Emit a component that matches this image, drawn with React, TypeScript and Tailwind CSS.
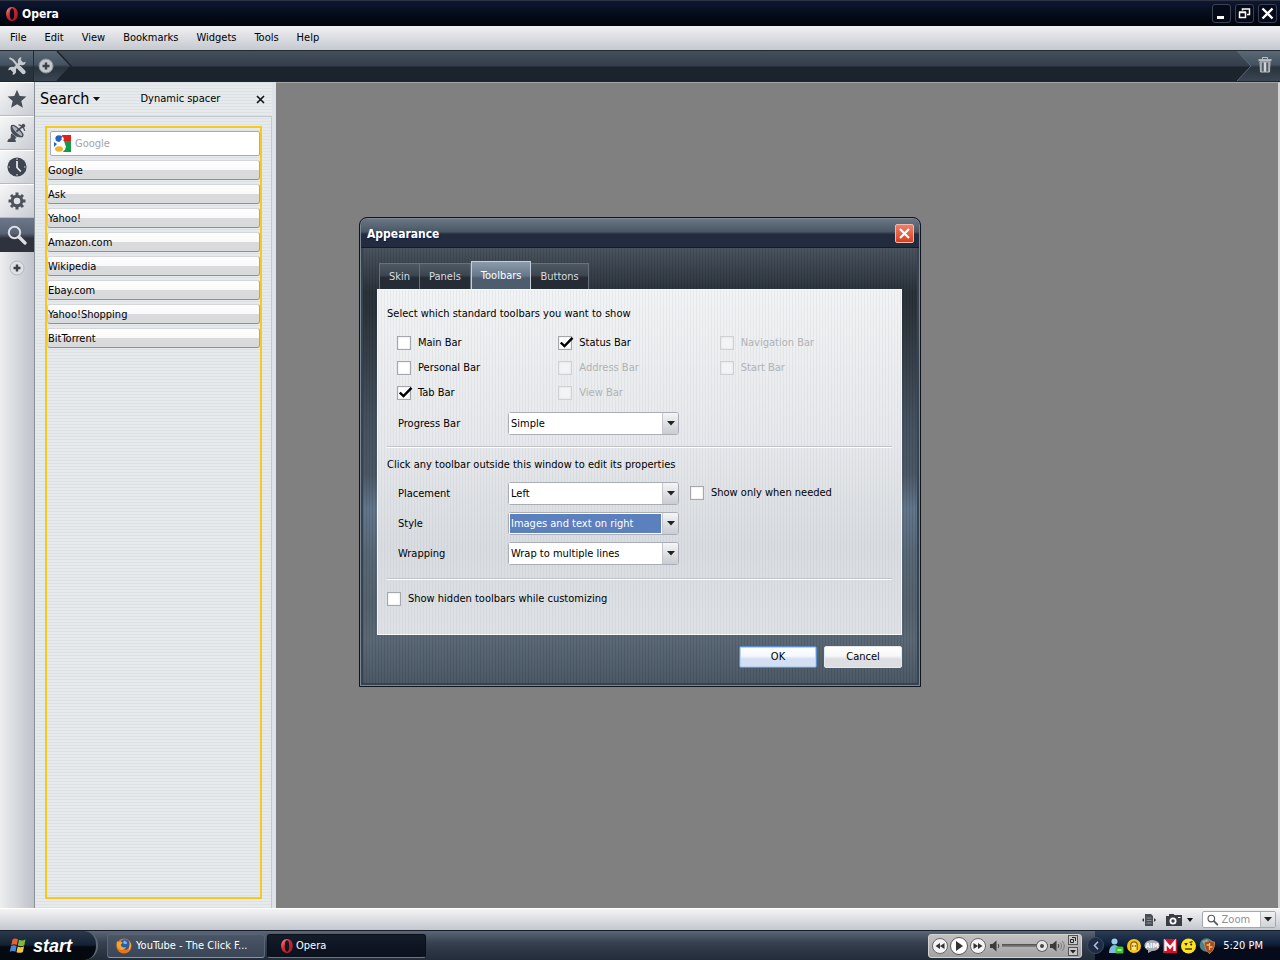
import { useState } from "react";
import type { ReactNode } from "react";

const menuItems = ["File", "Edit", "View", "Bookmarks", "Widgets", "Tools", "Help"];

const searchEngines = [
  "Google",
  "Ask",
  "Yahoo!",
  "Amazon.com",
  "Wikipedia",
  "Ebay.com",
  "Yahoo!Shopping",
  "BitTorrent",
];

const tabs = ["Skin", "Panels", "Toolbars", "Buttons"];

const toolbars = [
  { name: "Main Bar", checked: false, disabled: false },
  { name: "Status Bar", checked: true, disabled: false },
  { name: "Navigation Bar", checked: false, disabled: true },
  { name: "Personal Bar", checked: false, disabled: false },
  { name: "Address Bar", checked: false, disabled: true },
  { name: "Start Bar", checked: false, disabled: true },
  { name: "Tab Bar", checked: true, disabled: false },
  { name: "View Bar", checked: false, disabled: true },
];

function OperaLogo() {
  return (
    <svg width="14" height="16" viewBox="0 0 14 16">
      <defs>
        <linearGradient id="opera-red" x1="0" y1="0" x2="1" y2="1">
          <stop offset="0" stopColor="#f3a0a0" />
          <stop offset="0.4" stopColor="#d32a33" />
          <stop offset="1" stopColor="#a0161e" />
        </linearGradient>
      </defs>
      <path
        fill="url(#opera-red)"
        fillRule="evenodd"
        d="M7 1c3.600 0 5.800 3 5.800 7s-2.200 7-5.800 7-5.800-3-5.800-7 2.200-7 5.800-7zm0 1.300c-1.500 0-2.200 2.300-2.200 5.700s.7 5.700 2.200 5.700 2.200-2.300 2.200-5.700-.7-5.700-2.200-5.700z"
      />
    </svg>
  );
}

function PlusBadge({ dark = false }: { dark?: boolean }) {
  return (
    <svg width="16" height="16" viewBox="0 0 16 16">
      <circle cx="8" cy="8" r="7" fill={dark ? "#c3c8cd" : "#dfe2e5"} stroke={dark ? "#8b939b" : "#b3b8be"} />
      <path d="M8 4.500v7M4.500 8h7" stroke="#3b4149" strokeWidth="2.400" />
    </svg>
  );
}

function StarIcon() {
  return (
    <svg width="20" height="20" viewBox="0 0 20 20">
      <path
        fill="#474d57"
        d="M10 .8l2.700 6.200 6.700.6-5.100 4.400 1.600 6.700L10 15.200l-5.900 3.500 1.600-6.700L.6 7.600l6.700-.6z"
      />
    </svg>
  );
}

function DishIcon() {
  return (
    <svg width="20" height="20" viewBox="0 0 20 20" fill="none" stroke="#474d57">
      <path d="M4.500 2.500C2.500 8.500 7.500 15.500 16 13.500z" fill="#474d57" />
      <ellipse cx="10.200" cy="8" rx="7.400" ry="2.400" transform="rotate(44 10.200 8)" fill="#aeb3bb" strokeWidth="1.400" />
      <path d="M9.500 8.500L16 3" strokeWidth="1.700" />
      <circle cx="16.300" cy="2.800" r="1.500" fill="#474d57" />
      <path d="M11.500 1.800c2.500.2 5.800 3 6.200 6" strokeWidth="1.300" />
      <path d="M4.500 11l4.500 3.500-1.500 1.500 1 2.500H.8l.8-2 2.400-.8z" fill="#474d57" />
    </svg>
  );
}

function ClockIcon() {
  return (
    <svg width="20" height="20" viewBox="0 0 20 20">
      <circle cx="10" cy="10" r="9.600" fill="#3f4550" />
      <path d="M10 4v6.500l3.800 4" stroke="#eceef0" strokeWidth="1.700" fill="none" />
      <path d="M10 1.500v1.500M10 17v1.500M1.500 10H3M17 10h1.500" stroke="#d5d8dc" strokeWidth="1.200" />
    </svg>
  );
}

function GearIcon() {
  return (
    <svg width="20" height="20" viewBox="0 0 20 20" stroke="#4d535d" fill="none">
      <circle cx="10" cy="10" r="4.800" strokeWidth="3" />
      <path
        strokeWidth="3"
        d="M10 1.500v3M10 15.500v3M1.500 10h3M15.500 10h3M4 4l2 2M14 14l2 2M16 4l-2 2M6 14l-2 2"
      />
    </svg>
  );
}

function LensIcon({ size, color }: { size: number; color: string }) {
  return (
    <svg width={size} height={size} viewBox="0 0 20 20" fill="none" stroke={color}>
      <circle cx="7.500" cy="7.500" r="5.700" strokeWidth="2" />
      <path d="M12 12l6 6" strokeWidth="3.200" strokeLinecap="round" />
    </svg>
  );
}

function ToolsIcon() {
  return (
    <svg width="20" height="20" viewBox="0 0 20 20" fill="none" stroke="#c5cad0">
      <path d="M2.500 2l3.500 2 5.500 6.500" strokeWidth="2" />
      <path d="M12 11.500l4.500 4.500" strokeWidth="4.400" strokeLinecap="round" />
      <path d="M14 6L5 15" strokeWidth="3" />
      <path d="M14.500 1.200a4 4 0 1 0 4.300 4.600l-2.600.7-2.400-2.400z" fill="#c5cad0" stroke="none" />
      <path d="M5.500 18.800a4 4 0 1 0-4.300-4.600l2.600-.4 2.200 2.200z" fill="#c5cad0" stroke="none" />
    </svg>
  );
}

function TrashIcon() {
  return (
    <svg width="14" height="16" viewBox="0 0 14 16" fill="none" stroke="#b9bec4">
      <path d="M4.500 2.500v-2h5v2" />
      <path d="M.5 3.200h13" strokeWidth="2.200" />
      <path d="M2 5h10l-.5 10h-9z" fill="#99a0a8" />
      <path d="M4.800 5.500v9M9.200 5.500v9" stroke="#4b535c" strokeWidth="1.400" />
      <path d="M7 5.500v9" stroke="#dfe2e5" strokeWidth="1.600" />
    </svg>
  );
}

function GoogleIcon() {
  return (
    <svg width="17" height="17" viewBox="0 0 17 17">
      <path fill="#fff" d="M0 0h17v17H0z" />
      <path fill="#e0201c" d="M8 0h9v6H9z" />
      <path fill="#149a48" d="M10 6h7v11H9l3-5z" />
      <path fill="#2a62c4" d="M0 7l3 2-3 3z" />
      <ellipse cx="5" cy="3.600" rx="3.600" ry="3.300" fill="#2a62c4" />
      <ellipse cx="5" cy="14" rx="4" ry="2.800" fill="#f0b429" />
      <path d="M8 2.500c3 3-3 4-1.500 6S11.500 11 10 15" stroke="#fff" strokeWidth="2" fill="none" />
    </svg>
  );
}

function FirefoxIcon() {
  return (
    <svg width="16" height="16" viewBox="0 0 16 16">
      <circle cx="8" cy="8" r="7.600" fill="#e8741c" />
      <circle cx="8.800" cy="6.500" r="5.200" fill="#2a5da8" />
      <path d="M8 2.500c2 .5 3 1.500 3.200 3l-2 .8L7 5z" fill="#7fb6e6" />
      <path d="M1 3l1.500 1.200C4 3 6 3.500 6.500 5L4.800 6.500C5 9 7.500 10 10 9c-1 3-5 4-7.500 1.500S.5 5.500 1 3z" fill="#f6a52c" />
      <path d="M13.500 3c1.800 3 1.500 7-1 9.500 1-3 1.500-6 1-9.500z" fill="#fbd44a" />
    </svg>
  );
}

function WindowsFlag() {
  return (
    <svg width="18" height="18" viewBox="0 0 18 18">
      <path fill="#e8602c" d="M3.500 2.500C5.500 1 7 1.300 9 2.300L7.800 8C6 7 4.300 7 2.300 8z" />
      <path fill="#7dbb3c" d="M10 2.800c2 1 4 1 6.500-.2L15.300 8.300c-2.400 1.200-4.300 1-6.400.2z" />
      <path fill="#4a86d8" d="M2 9c2-1.200 3.800-1 5.600 0l-1.200 5.700c-2-1-3.600-1-5.600 0z" />
      <path fill="#f4c73a" d="M8.700 9.500c2 1 4 1 6.400-.2L13.900 15c-2.400 1.200-4.300 1-6.400.2z" />
    </svg>
  );
}

function Caret() {
  return (
    <svg width="8" height="5" viewBox="0 0 8 5">
      <path d="M0 0h8L4 4.500z" fill="#222" />
    </svg>
  );
}

function Speaker({ waves = 1 }: { waves?: number }) {
  return (
    <svg width={waves > 1 ? 15 : 10} height="12" viewBox={waves > 1 ? "0 0 15 12" : "0 0 10 12"}>
      <path d="M0 4h2.500L6.500.5v11L2.500 8H0z" fill="#3a3a3a" />
      <path d="M8 4c1 1 1 3 0 4" stroke="#3a3a3a" fill="none" />
      {waves > 1 && <path d="M10 2.500c2 2 2 5 0 7M12 1c3 3 3 7 0 10" stroke="#777" fill="none" />}
    </svg>
  );
}

function Checkbox({
  label,
  checked = false,
  disabled = false,
}: {
  label: string;
  checked?: boolean;
  disabled?: boolean;
}) {
  return (
    <label className={`flex items-center gap-[7px] ${disabled ? "text-[#b0b3b6]" : "text-black"}`}>
      <span className="relative h-3.5 w-3.5">
        <input
          type="checkbox"
          defaultChecked={checked}
          disabled={disabled}
          className="peer block h-3.5 w-3.5 appearance-none border border-[#a4a7ab] bg-white shadow-[inset_0_0_2px_#d5d5d5] disabled:border-[#cfd1d4] disabled:bg-[#f3f4f5]"
        />
        <svg
          className="pointer-events-none absolute left-0.5 top-px hidden peer-checked:block"
          width="14"
          height="11"
          viewBox="0 0 14 11"
        >
          <path d="M.8 5.500L4.500 9 12.500 .8" stroke="#000" strokeWidth="2.400" fill="none" />
        </svg>
      </span>
      {label}
    </label>
  );
}

function SelectRow({
  id,
  label,
  value,
  active = false,
  children,
}: {
  id: string;
  label: string;
  value: string;
  active?: boolean;
  children?: ReactNode;
}) {
  return (
    <div className="flex h-[30px] items-center pl-[11px]">
      <label htmlFor={id} className="w-[110px] pt-0.5">
        {label}
      </label>
      <div className="mr-[11px] flex h-[23px] w-[171px] rounded-[3px] border border-[#a9adb5] bg-white">
        <div className="flex-1">
          <select
            id={id}
            defaultValue={value}
            className={`h-full w-full appearance-none border border-white pl-px pt-0.5 outline-none ${
              active ? "bg-[#5c80bd] text-white" : "bg-white text-black"
            }`}
          >
            <option>{value}</option>
          </select>
        </div>
        <span className="flex w-4 items-center justify-center rounded-r-[2px] border-l border-[#c4c7cc] bg-linear-to-b from-[#f4f5f6] to-[#c9ccd2]">
          <Caret />
        </span>
      </div>
      {children}
    </div>
  );
}

function WindowButton({ label, children }: { label: string; children: ReactNode }) {
  return (
    <button
      aria-label={label}
      className="flex h-[19px] w-[19px] items-center justify-center rounded-[3px] border border-[#3a4254] bg-[#060a18]"
    >
      <svg width="13" height="13" viewBox="0 0 13 13" fill="none" stroke="#fff">
        {children}
      </svg>
    </button>
  );
}

function RailButton({ label, active = false, children }: { label: string; active?: boolean; children: ReactNode }) {
  return (
    <button
      aria-label={label}
      className={`flex h-[34px] items-center justify-center ${
        active
          ? "bg-linear-to-b from-[#6c778a] from-0% via-[#5a6376] via-45% to-[#2d323c] to-60%"
          : "border-b border-t border-b-[#b7bbc1] border-t-white bg-linear-to-br from-[#f6f7f8] to-[#c9cdd4]"
      }`}
    >
      {children}
    </button>
  );
}

function AppearanceDialog() {
  const [tab, setTab] = useState("Toolbars");

  return (
    <section
      role="dialog"
      aria-labelledby="dialog-title"
      className="pointer-events-auto flex w-[562px] flex-col rounded-t-lg border border-[#10161f] bg-[#4f5d6b] p-px ring-1 ring-inset ring-[#7b8794]"
    >
      <header className="flex h-[29px] items-center justify-between rounded-t-md border-b border-[#141b28] bg-linear-to-b from-[#6a7682] from-0% via-[#4a5765] via-45% to-[#222c3e] to-55% pl-[6px] pr-[5px]">
        <h1 id="dialog-title" className="pt-0.5 text-[12px] font-bold text-white [text-shadow:1px_1px_1px_#0b1a4a]">
          Appearance
        </h1>
        <button
          aria-label="Close dialog"
          className="flex h-[19px] w-[19px] items-center justify-center rounded-[2px] border border-[#f3b9a8] bg-linear-to-b from-[#ee7f66] to-[#dc3a1c]"
        >
          <svg width="11" height="11" viewBox="0 0 11 11">
            <path d="M1 1l9 9M10 1l-9 9" stroke="#fff" strokeWidth="2.200" />
          </svg>
        </button>
      </header>

      <div className="border-x-2 border-b-2 border-[#37434f] bg-[repeating-linear-gradient(90deg,rgba(0,0,0,0.1)_0_1px,transparent_1px_3px),linear-gradient(180deg,#49545f_0%,#2b323a_10%,#2c333a_14%,#465462_42%,#4b5866_52%,#62768b_60%,#586877_70%,#55636f_82%,#5b6976_90%,#4c5a68_100%)] pb-[15px] pl-3.5 pr-[15px] pt-[13px]">
        <div role="tablist" className="flex items-end pl-0.5">
          {tabs.map((name) => (
            <button
              key={name}
              role="tab"
              aria-selected={tab === name}
              onClick={() => setTab(name)}
              className={
                tab === name
                  ? "h-7 border-x border-t border-[#c5cfda] bg-linear-to-b from-[#8c9bab] from-0% via-[#67788a] via-50% to-[#4d5d6e] to-60% px-[9px] text-white"
                  : "h-[26px] border-r border-t border-[#66717c] bg-linear-to-b from-[#4e5964] from-0% via-[#3c4650] via-45% to-[#252c35] to-55% px-[9px] text-[#d9dde2] first:border-l"
              }
            >
              {name}
            </button>
          ))}
        </div>

        <div className="border border-[#f6f8f9] bg-[repeating-linear-gradient(90deg,rgba(120,140,150,0.09)_0_1px,transparent_1px_3px),linear-gradient(180deg,#f1f3f4,#e6e8eb_45%,#d9dce0_75%,#dfe2e5)] px-[9px] pb-[27px] pt-4">
          <p className="h-4 leading-4">Select which standard toolbars you want to show</p>
          <div className="mt-2 grid grid-cols-3 pl-[10px] pr-[11px]">
            {toolbars.map((t) => (
              <div key={t.name} className="flex h-[25px] items-center">
                <Checkbox label={t.name} checked={t.checked} disabled={t.disabled} />
              </div>
            ))}
          </div>
          <div className="mt-[3px]">
            <SelectRow id="progress" label="Progress Bar" value="Simple" />
          </div>
          <hr className="mt-2 border-b border-t border-b-white border-t-[#bfc3c8]" />
          <p className="mt-[9px] h-4 leading-4">Click any toolbar outside this window to edit its properties</p>
          <div className="mt-[5px]">
            <SelectRow id="placement" label="Placement" value="Left">
              <Checkbox label="Show only when needed" />
            </SelectRow>
            <SelectRow id="style" label="Style" value="Images and text on right" active />
            <SelectRow id="wrapping" label="Wrapping" value="Wrap to multiple lines" />
          </div>
          <hr className="mt-[10px] border-b border-t border-b-white border-t-[#bfc3c8]" />
          <div className="mt-[11px] flex h-4 items-center">
            <Checkbox label="Show hidden toolbars while customizing" />
          </div>
        </div>

        <div className="mt-[11px] flex justify-end gap-[7px]">
          <button className="h-[22px] w-[78px] rounded-[2px] border border-[#5c8fd0] bg-linear-to-b from-white from-0% via-[#f5f8fd] via-45% to-[#d3dff2] to-60% ring-1 ring-inset ring-[#b9d2f2]">
            OK
          </button>
          <button className="h-[22px] w-[78px] rounded-[2px] border border-[#e6e8ea] bg-linear-to-b from-white from-0% via-[#f7f7f8] via-45% to-[#dcdee2] to-60%">
            Cancel
          </button>
        </div>
      </div>
    </section>
  );
}

function MediaPlayer() {
  return (
    <div className="flex h-6 w-[154px] items-center rounded-[3px] border border-[#d2d2d2] bg-linear-to-b from-[#c2c2c2] to-[#a2a2a2] px-[3px]">
      <button aria-label="Previous" className="flex h-4 w-4 items-center justify-center rounded-full border border-[#666] bg-[#f4f4f4]">
        <svg width="10" height="6" viewBox="0 0 10 6"><path d="M5 0v6L.5 3zM9.500 0v6L5 3z" fill="#333" /></svg>
      </button>
      <button aria-label="Play" className="mx-[2px] flex h-[18px] w-[18px] items-center justify-center rounded-full border border-[#555] bg-white">
        <svg width="8" height="10" viewBox="0 0 8 10"><path d="M1 0l7 5-7 5z" fill="#333" /></svg>
      </button>
      <button aria-label="Next" className="mr-1 flex h-4 w-4 items-center justify-center rounded-full border border-[#666] bg-[#f4f4f4]">
        <svg width="10" height="6" viewBox="0 0 10 6"><path d="M.5 0v6L5 3zM5 0v6l4.500-3z" fill="#333" /></svg>
      </button>
      <Speaker />
      <input
        type="range"
        aria-label="Volume"
        defaultValue={98}
        className="mx-0.5 h-[10px] w-[46px] appearance-none bg-[linear-gradient(#4c4c4c,#8a8a86)] bg-[length:100%_3px] bg-center bg-no-repeat [&::-webkit-slider-thumb]:h-[10px] [&::-webkit-slider-thumb]:w-[10px] [&::-webkit-slider-thumb]:appearance-none [&::-webkit-slider-thumb]:rounded-full [&::-webkit-slider-thumb]:border-[3px] [&::-webkit-slider-thumb]:border-[#e8e8e8] [&::-webkit-slider-thumb]:bg-[#444] [&::-webkit-slider-thumb]:shadow-[0_0_0_1px_#666]"
      />
      <Speaker waves={3} />
      <div className="ml-auto flex flex-col gap-0.5">
        <button aria-label="Restore player" className="flex h-[10px] w-[10px] items-center justify-center border border-[#555] bg-[#c8c8c8]">
          <svg width="6" height="6" viewBox="0 0 6 6" fill="none" stroke="#222"><path d="M.5 2.500h3v3h-3zM2 .5h3.500V4" /></svg>
        </button>
        <button aria-label="Player menu" className="flex h-[9px] w-[10px] items-center justify-center border border-[#555] bg-[#c8c8c8]">
          <svg width="6" height="4" viewBox="0 0 6 4"><path d="M0 0h6L3 3.500z" fill="#222" /></svg>
        </button>
      </div>
    </div>
  );
}

function Tray() {
  return (
    <div className="flex h-full items-center gap-[2px] bg-linear-to-b from-[#2a3d55] from-0% via-[#10203a] via-45% to-[#050b1a] to-60% pr-[17px]">
      <button aria-label="Show hidden icons" className="-ml-2 mr-0.5 flex h-[17px] w-[17px] items-center justify-center rounded-full border border-[#3d4c66] bg-[#1f2b45]">
        <svg width="6" height="9" viewBox="0 0 6 9"><path d="M5 .8L1.500 4.500 5 8.200" stroke="#aebdd8" strokeWidth="1.600" fill="none" /></svg>
      </button>
      {/* messenger */}
      <svg width="16" height="16" viewBox="0 0 16 16">
        <circle cx="6.500" cy="3.500" r="3" fill="#9fd0ea" />
        <path d="M1 15c0-5 2.500-8 5.500-8S12 10 12 15z" fill="#7cbbe0" />
        <rect x="7.500" y="8.500" width="8" height="7" rx="1.500" fill="#3cc42c" />
        <path d="M9.500 12h4" stroke="#d8ffd0" strokeWidth="1.500" />
      </svg>
      <svg width="16" height="16" viewBox="0 0 16 16">
        <circle cx="8" cy="8" r="7" fill="#f5c518" />
        <path d="M4.800 12V7a3.200 3.200 0 0 1 6.400 0v5" fill="#fbe27a" stroke="#8a5a00" strokeWidth="1.200" />
        <circle cx="6.800" cy="8" r=".7" fill="#553300" />
        <circle cx="9.300" cy="8" r=".7" fill="#553300" />
      </svg>
      <svg width="16" height="16" viewBox="0 0 16 16">
        <ellipse cx="8" cy="7.500" rx="7.600" ry="5.500" fill="#a9adb5" />
        <path d="M4 12l0 3 4-2z" fill="#a9adb5" />
        <text x="8" y="10" textAnchor="middle" fontSize="7" fontWeight="bold" fill="#fff">AIM</text>
      </svg>
      {/* antivirus */}
      <svg width="16" height="16" viewBox="0 0 16 16">
        <rect x="1" y="1" width="14" height="14" fill="#d3122e" />
        <path d="M3.500 13V4L8 9.500 12.500 4v9" stroke="#fff" strokeWidth="2.400" fill="none" />
      </svg>
      <svg width="17" height="16" viewBox="0 0 17 16">
        <circle cx="8.500" cy="8" r="7.500" fill="#ffe21a" />
        <path d="M4.500 5.500h3M9.500 4.500l3-.8" stroke="#222" strokeWidth="1.200" />
        <circle cx="6" cy="6.500" r="1" fill="#222" />
        <circle cx="11.200" cy="6.500" r="1" fill="#222" />
        <path d="M5 11h7" stroke="#222" strokeWidth="1.300" />
      </svg>
      <svg width="17" height="16" viewBox="0 0 17 16">
        <circle cx="7.500" cy="7" r="6.800" fill="#4d7f86" />
        <path d="M3 3c2 0 4-1 5-2l2 4-4 3z" fill="#8fb8a8" />
        <path d="M5.500 4c2 0 3.500-.6 5-1.600C12 3.400 13.500 4 15.500 4c0 6-1.500 9-5 11.500C7 13 5.500 10 5.500 4z" fill="#a8492a" stroke="#b98a5a" />
        <path d="M10.500 5v4h3M10.500 9v3M7.500 7h3" stroke="#efc24a" strokeWidth="1.300" fill="none" />
      </svg>
      <time className="ml-[5px] whitespace-nowrap text-white">5:20 PM</time>
    </div>
  );
}

export default function App() {
  return (
    <div className="relative flex h-screen min-h-[760px] flex-col overflow-hidden bg-[#808080] font-['DejaVu_Sans_Condensed','DejaVu_Sans',sans-serif] text-[11px] leading-4 text-black">
      {/* Title bar */}
      <header className="flex h-[26px] shrink-0 items-center border-t border-[#2d3342] bg-linear-to-b from-[#0d1730] to-[#02040a] pl-[5px] pr-[3px]">
        <OperaLogo />
        <span className="ml-[3px] text-[12px] font-bold text-white">Opera</span>
        <div className="ml-auto flex gap-1">
          <WindowButton label="Minimize">
            <path d="M2 10.500h7" strokeWidth="3" />
          </WindowButton>
          <WindowButton label="Restore">
            <path d="M1.500 5.500h6v5h-6zM1 5h7" strokeWidth="1.500" />
            <path d="M4.500 3.500V2h7v5.500H9" strokeWidth="1.500" />
          </WindowButton>
          <WindowButton label="Close">
            <path d="M1.500 1.500l10 10M11.500 1.500l-10 10" strokeWidth="2.400" />
          </WindowButton>
        </div>
      </header>

      {/* Menu */}
      <nav className="flex h-6 shrink-0 items-center gap-[18px] bg-linear-to-b from-[#f0f1f3] to-[#c5c9d0] pl-[10px]">
        {menuItems.map((item) => (
          <button key={item}>{item}</button>
        ))}
      </nav>

      {/* Tab bar */}
      <div className="flex h-8 shrink-0 justify-between border-b border-t border-b-[#20262d] border-t-[#252b33] bg-linear-to-b from-[#444f5c] from-0% via-[#353f4b] via-48% to-[#1b232c] to-55%">
        <div className="flex">
          <button
            aria-label="Customize"
            className="flex w-[34px] items-center justify-center border-r border-[#222a33] bg-linear-to-b from-[#5a6877] from-0% via-[#45525f] via-45% to-[#29333e] to-55%"
          >
            <ToolsIcon />
          </button>
          <button aria-label="New tab" className="relative flex w-[39px] items-center pl-1">
            <svg className="absolute inset-0 h-full w-full" viewBox="0 0 39 30" preserveAspectRatio="none">
              <defs>
                <linearGradient id="arrow" x1="0" y1="0" x2="0" y2="1">
                  <stop offset="0" stopColor="#5a6877" />
                  <stop offset="0.45" stopColor="#45525f" />
                  <stop offset="0.55" stopColor="#29333e" />
                  <stop offset="1" stopColor="#3a4652" />
                </linearGradient>
              </defs>
              <path d="M0 0h23l14 15-14 15H0z" fill="url(#arrow)" />
              <path d="M23 0l14 15-14 15" fill="none" stroke="#1d242c" strokeWidth="1.500" />
            </svg>
            <span className="relative">
              <PlusBadge dark />
            </span>
          </button>
        </div>
        <button aria-label="Closed tabs" className="relative flex w-[45px] items-center justify-end pb-0.5 pr-2">
          <svg className="absolute inset-0 h-full w-full" viewBox="0 0 45 30" preserveAspectRatio="none">
            <path d="M2 0h43v30H2l14-15z" fill="url(#arrow)" />
            <path d="M2 0l14 15L2 30" fill="none" stroke="#5c6976" />
          </svg>
          <span className="relative">
            <TrashIcon />
          </span>
        </button>
      </div>

      <main className="flex min-h-0 flex-1">
        {/* Panel selector */}
        <nav className="flex w-[35px] shrink-0 flex-col border-r border-[#8b9097] bg-linear-to-r from-[#eceef0] to-[#bfc3ca]">
          <RailButton label="Bookmarks"><StarIcon /></RailButton>
          <RailButton label="Feeds"><DishIcon /></RailButton>
          <RailButton label="History"><ClockIcon /></RailButton>
          <RailButton label="Settings"><GearIcon /></RailButton>
          <RailButton label="Search" active><LensIcon size={20} color="#dcdfe3" /></RailButton>
          <button aria-label="Add panel" className="flex h-8 items-center justify-center">
            <PlusBadge />
          </button>
        </nav>

        {/* Search panel */}
        <aside className="flex w-[241px] shrink-0 flex-col border-r-4 border-[#dfe3e7] bg-[#e6eaec] bg-[repeating-linear-gradient(0deg,rgba(120,140,150,0.09)_0_1px,transparent_1px_3px)]">
          <div className="flex h-[34px] items-center pl-[5px] pr-[7px]">
            <button className="flex items-center gap-1 text-[16px]">
              Search
              <svg width="7" height="4" viewBox="0 0 7 4"><path d="M0 0h7L3.500 4z" fill="#111" /></svg>
            </button>
            <span className="ml-10">Dynamic spacer</span>
            <button aria-label="Close panel" className="ml-auto">
              <svg width="9" height="9" viewBox="0 0 9 9"><path d="M1 1l7 7M8 1L1 8" stroke="#111" strokeWidth="1.600" /></svg>
            </button>
          </div>
          <div className="flex flex-1 flex-col border-r border-t border-[#c3c8cd] pb-[9px] pl-[10px] pr-[9px] pt-[9px]">
            <div className="flex flex-1 flex-col gap-1 border-2 border-[#f9c81c]">
              <div className="ml-[3px] mt-[3px] flex h-[25px] items-center gap-1 rounded-[2px] border border-[#a8acb1] bg-white pl-[3px]">
                <GoogleIcon />
                <input
                  type="text"
                  aria-label="Search with Google"
                  placeholder="Google"
                  className="min-w-0 flex-1 bg-transparent outline-none placeholder:text-[#a2a4a7]"
                />
              </div>
              {searchEngines.map((name) => (
                <button
                  key={name}
                  className="h-5 rounded-[3px] border border-b-[#8d9094] border-l-[#c9cbce] border-r-[#a5a8ab] border-t-[#d4d6d8] bg-linear-to-b from-white from-0% via-[#f9f9f9] via-48% to-[#d9dadb] to-52% pt-0.5 text-left"
                >
                  {name}
                </button>
              ))}
            </div>
          </div>
        </aside>

        <div className="flex-1 border-r-2 border-t border-r-[#d5d5d5] border-t-[#a5a5a5] bg-[#808080]" />
      </main>

      {/* Status bar */}
      <footer className="flex h-[22px] shrink-0 items-center justify-end border-t border-white bg-linear-to-b from-[#f3f4f5] to-[#c3c7cf] pr-1">
        <button aria-label="Fit to width" className="mr-[9px]">
          <svg width="16" height="14" viewBox="0 0 16 14">
            <path d="M4 1h6l2 2v10H4z" fill="#4a4e55" />
            <path d="M5.500 5h5M5.500 7.500h5M5.500 10h5" stroke="#8b9097" />
            <path d="M3 5v4L1 7zM13 5v4L15 7z" fill="#333" />
          </svg>
        </button>
        <button aria-label="Show images" className="flex items-center gap-[5px]">
          <svg width="16" height="14" viewBox="0 0 16 14">
            <path d="M0 3h3V1h5v1h8v11H0z" fill="#3a3e44" />
            <circle cx="7" cy="8" r="3.500" fill="#fff" />
            <circle cx="7" cy="8" r="1.700" fill="#3a3e44" />
            <path d="M12 4.500h2.500" stroke="#fff" />
          </svg>
          <svg width="6" height="4" viewBox="0 0 6 4"><path d="M0 0h6L3 4z" fill="#111" /></svg>
        </button>
        <div className="ml-[9px] flex h-[17px] w-[74px] items-center rounded-[2px] border border-[#a4a8ae] bg-white pl-1">
          <LensIcon size={12} color="#555a60" />
          <input
            aria-label="Zoom"
            placeholder="Zoom"
            className="ml-[3px] w-[38px] bg-transparent outline-none placeholder:text-[#8d9094]"
          />
          <button aria-label="Zoom levels" className="ml-auto flex h-full w-4 items-center justify-center border-l border-[#b5b8bd] bg-linear-to-b from-[#f1f2f3] to-[#cfd2d7]">
            <Caret />
          </button>
        </div>
      </footer>

      {/* Taskbar */}
      <footer className="flex h-[30px] shrink-0 items-center border-t border-[#161d28] bg-linear-to-b from-[#5b6777] from-0% via-[#37414f] via-40% to-[#232c39] to-100%">
        <button className="flex h-full w-[98px] items-center rounded-r-[14px] border-r-2 border-[#5d6876] bg-linear-to-b from-[#2b394c] from-0% via-[#152133] via-48% to-[#04080f] to-55% pl-[9px] font-['Liberation_Sans',sans-serif] text-[18px] font-bold italic text-white">
          <WindowsFlag />
          <span className="ml-1.5">start</span>
        </button>
        <button className="ml-[9px] flex h-6 w-[158px] items-center gap-1 rounded-[3px] border border-[#5a6676] border-b-[#8995a5] bg-linear-to-b from-[#4a5666] to-[#3a4656] pl-2 text-white">
          <FirefoxIcon />
          YouTube - The Click F...
        </button>
        <button className="ml-0.5 flex h-6 w-[159px] items-center gap-0.5 rounded-[3px] border border-[#0a0e16] border-b-[#6a7686] bg-linear-to-b from-[#141c2a] to-[#0a101c] pl-3 text-white">
          <OperaLogo />
          Opera
        </button>
        <div className="ml-auto mr-[13px]">
          <MediaPlayer />
        </div>
        <Tray />
      </footer>

      <div className="pointer-events-none absolute inset-0 flex items-center justify-center pb-14">
        <AppearanceDialog />
      </div>
    </div>
  );
}
